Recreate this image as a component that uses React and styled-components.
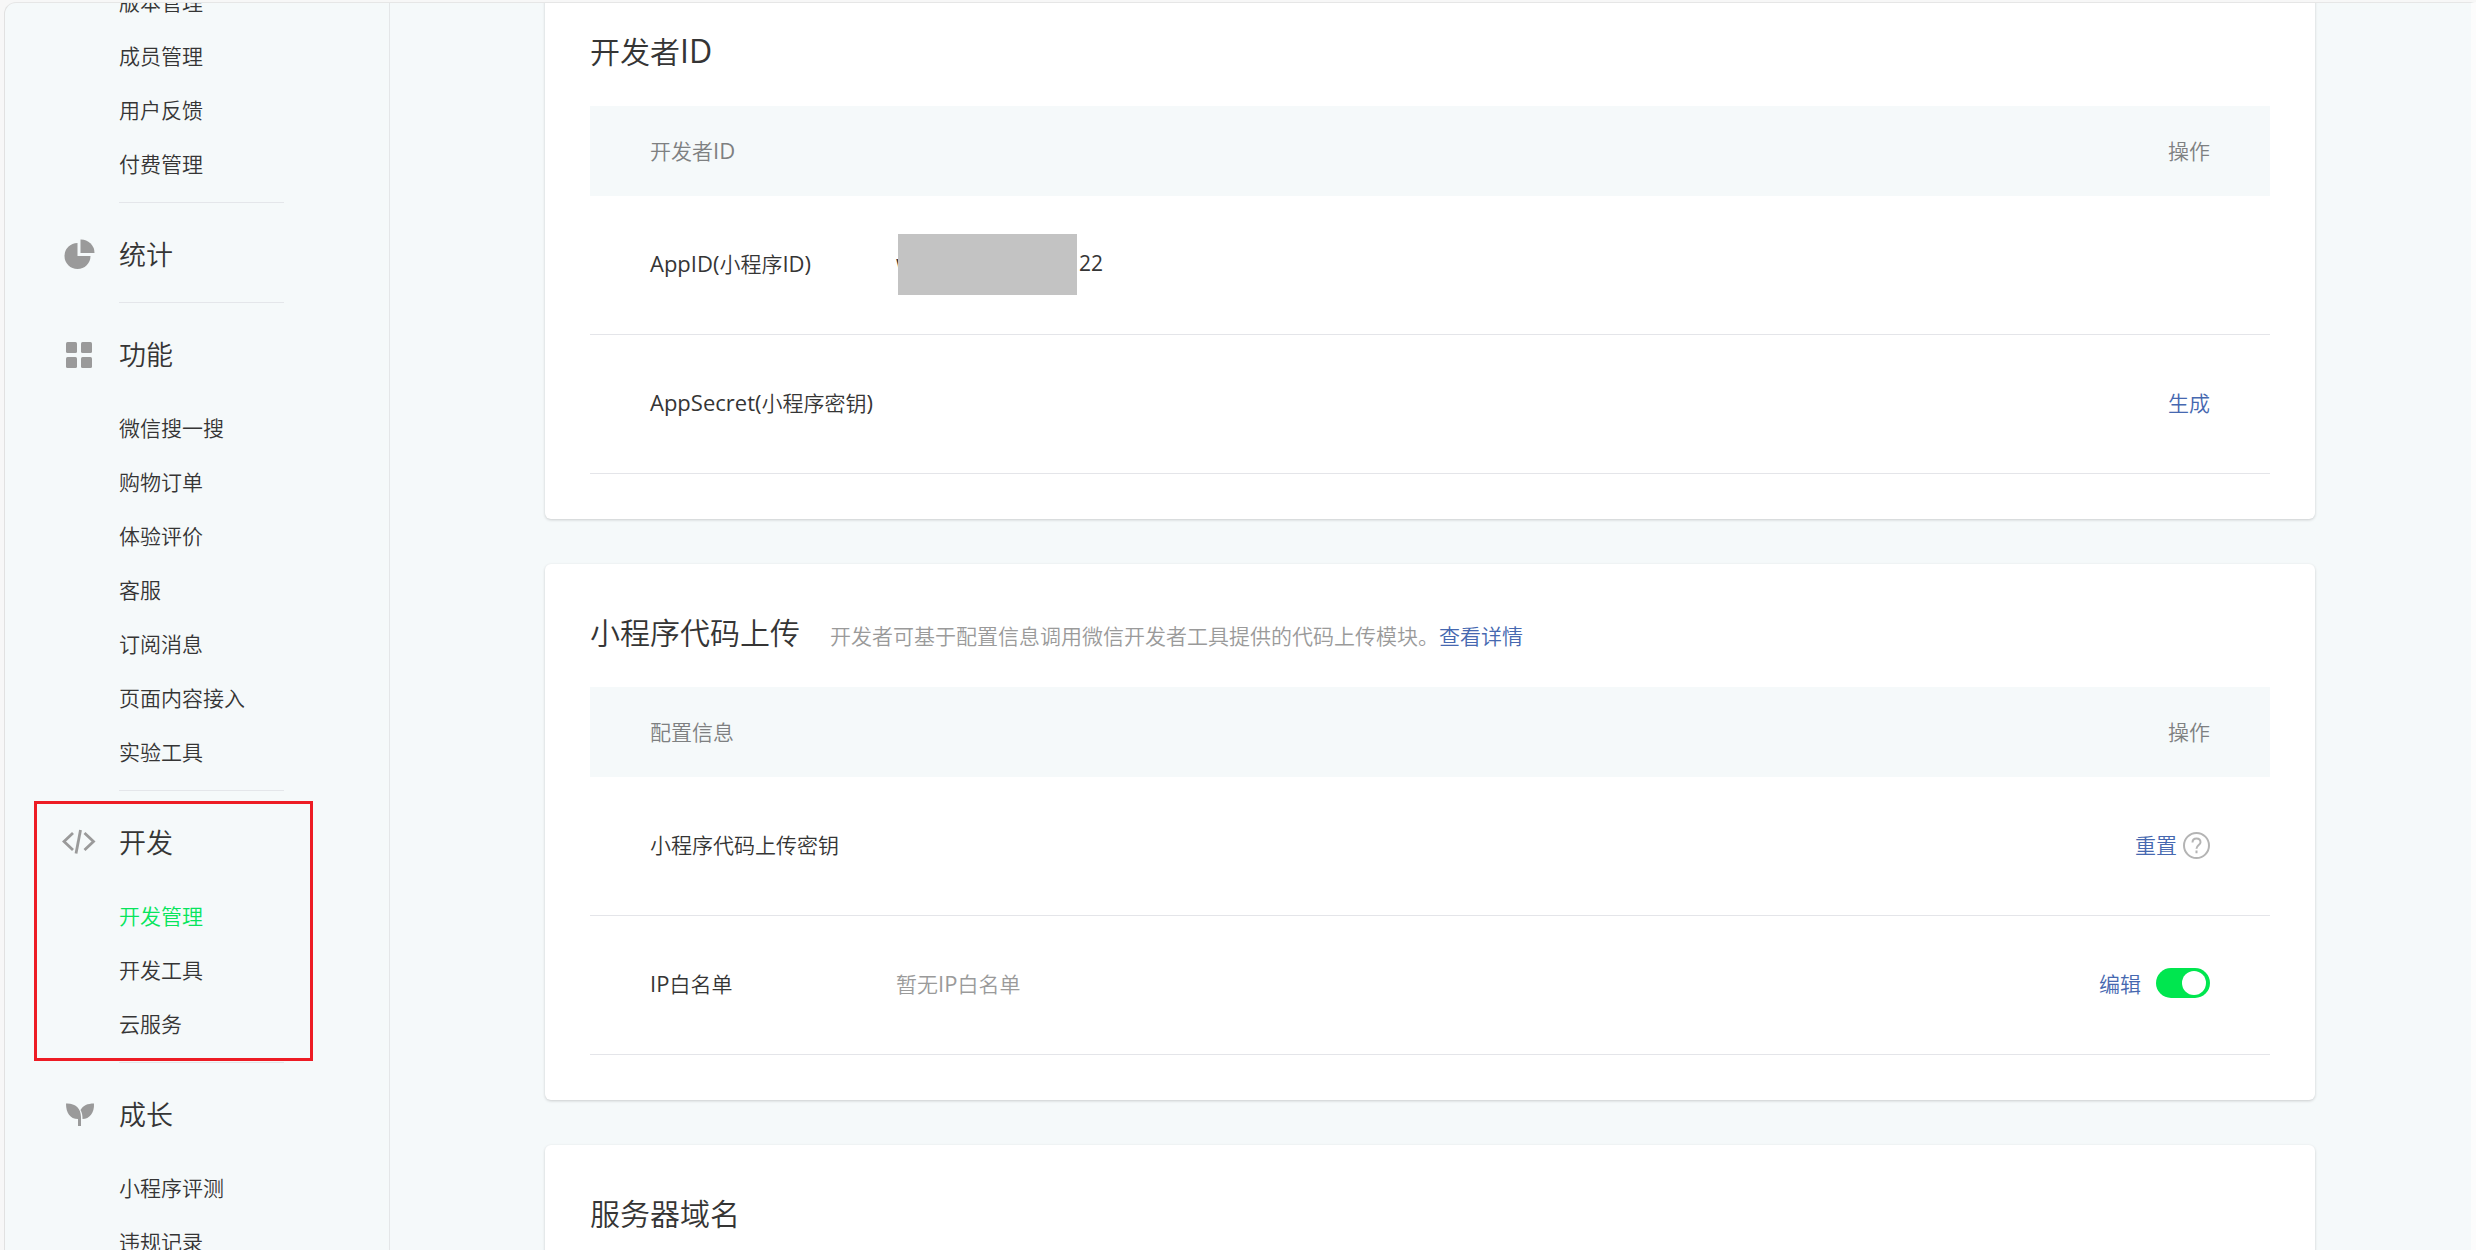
import React, { useState } from "react";
import styled, { createGlobalStyle } from "styled-components";

const menu = [
  {
    items: ["版本管理", "成员管理", "用户反馈", "付费管理"],
  },
  { title: "统计", icon: "chart", items: [] },
  {
    title: "功能",
    icon: "grid",
    items: [
      "微信搜一搜",
      "购物订单",
      "体验评价",
      "客服",
      "订阅消息",
      "页面内容接入",
      "实验工具",
    ],
  },
  {
    title: "开发",
    icon: "code",
    marked: true,
    items: ["开发管理", "开发工具", "云服务"],
  },
  { title: "成长", icon: "sprout", items: ["小程序评测", "违规记录"] },
];

const icons = {
  chart: (
    <>
      <path d="M15.500 5v13h13A13 13 0 1 1 15.500 5z" />
      <path d="M18.500 1.500A13.500 13.500 0 0 1 32.500 15H18.500z" />
    </>
  ),
  grid: (
    <>
      <rect x="4" y="4" width="11" height="11" rx="1.5" />
      <rect x="19" y="4" width="11" height="11" rx="1.5" />
      <rect x="4" y="19" width="11" height="11" rx="1.5" />
      <rect x="19" y="19" width="11" height="11" rx="1.5" />
    </>
  ),
  code: (
    <g fill="none" stroke="#9a9a9a" strokeWidth="2.8">
      <path d="M11 7L2 15.500L11 24" />
      <path d="M22.500 7L31.500 15.500L22.500 24" />
      <path d="M18.500 4L14 27.500" />
    </g>
  ),
  sprout: (
    <>
      <path d="M4 5.500C13 5 19 10 19 19v9h-3v-7C8 21 4 15 4 5.500z" />
      <path d="M32 5.500C32.500 15 27.500 21 20.500 21C20.500 17 20 14.500 18.500 12C21 7.500 25.500 5.500 32 5.500z" />
    </>
  ),
};

// latin letters are set a little heavier and larger than the chinese ones
function Mixed({ text, large }) {
  return text.split(/([A-Za-z()]+)/).map((part, i) =>
    i % 2 ? (
      <Latin key={i} $large={large}>
        {part}
      </Latin>
    ) : (
      part
    )
  );
}

function MenuSection({ section }) {
  return (
    <Section>
      {section.title && (
        <>
          <Divider />
          <SectionTitle>
            <MenuIcon viewBox="0 0 34 34" aria-hidden="true">
              {icons[section.icon]}
            </MenuIcon>
            <SectionName>{section.title}</SectionName>
          </SectionTitle>
        </>
      )}
      {section.items.length > 0 && (
        <MenuList>
          {section.items.map((item) => (
            <li key={item}>
              <MenuLink href="#" $active={item === "开发管理"}>
                {item}
              </MenuLink>
            </li>
          ))}
        </MenuList>
      )}
      {section.marked && <Marker />}
    </Section>
  );
}

function InfoTable({ heading, children }) {
  return (
    <Table>
      <thead>
        <tr>
          <HeadCell colSpan={2}>
            <Mixed text={heading} />
          </HeadCell>
          <HeadCell $right>操作</HeadCell>
        </tr>
      </thead>
      <tbody>{children}</tbody>
    </Table>
  );
}

function App() {
  const [whitelist, setWhitelist] = useState(true);

  return (
    <>
      <GlobalStyle />
      <Frame>
        <Sidebar>
          {menu.map((section, i) => (
            <MenuSection key={i} section={section} />
          ))}
        </Sidebar>
        <Content>
          <Card>
            <CardHeader>
              <CardTitle>
                <Mixed text="开发者ID" large />
              </CardTitle>
            </CardHeader>
            <InfoTable heading="开发者ID">
              <tr>
                <NameCell>
                  <Mixed text="AppID(小程序ID)" />
                </NameCell>
                <Cell>
                  <AppId>
                    <span>w</span>
                    <span>22</span>
                    <Mask />
                  </AppId>
                </Cell>
                <Cell />
              </tr>
              <tr>
                <NameCell colSpan={2}>
                  <Mixed text="AppSecret(小程序密钥)" />
                </NameCell>
                <Cell>
                  <Actions>
                    <TextButton type="button">生成</TextButton>
                  </Actions>
                </Cell>
              </tr>
            </InfoTable>
          </Card>

          <Card>
            <CardHeader>
              <CardTitle>小程序代码上传</CardTitle>
              <Description>
                开发者可基于配置信息调用微信开发者工具提供的代码上传模块。
                <Link href="#">查看详情</Link>
              </Description>
            </CardHeader>
            <InfoTable heading="配置信息">
              <tr>
                <NameCell>小程序代码上传密钥</NameCell>
                <Cell />
                <Cell>
                  <Actions $gap="6px" $align="flex-end">
                    <TextButton type="button">重置</TextButton>
                    <HelpIcon viewBox="0 0 27 27" aria-hidden="true">
                      <circle cx="13.5" cy="13.5" r="12.5" />
                      <path d="M9.500 10.500C9.500 8 11 6.500 13.500 6.500S17.500 8 17.500 10.200C17.500 13 13.500 13.200 13.500 16.800M13.500 18.600v2.600" />
                    </HelpIcon>
                  </Actions>
                </Cell>
              </tr>
              <tr>
                <NameCell>
                  <Mixed text="IP白名单" />
                </NameCell>
                <Cell $muted>
                  <Mixed text="暂无IP白名单" />
                </Cell>
                <Cell>
                  <Actions $gap="15px">
                    <TextButton type="button">编辑</TextButton>
                    <Switch
                      type="checkbox"
                      role="switch"
                      aria-label="IP白名单"
                      checked={whitelist}
                      onChange={(e) => setWhitelist(e.target.checked)}
                    />
                  </Actions>
                </Cell>
              </tr>
            </InfoTable>
          </Card>

          <Card>
            <CardHeader>
              <CardTitle>服务器域名</CardTitle>
            </CardHeader>
          </Card>
        </Content>
      </Frame>
    </>
  );
}

const GlobalStyle = createGlobalStyle`
  * {
    box-sizing: border-box;
  }

  body {
    margin: 0;
    background: #f7f7f7;
    color: #353535;
    font-family: "Open Sans", "Noto Sans CJK SC", sans-serif;
    font-size: 21px;
    font-weight: 350;
    overflow: hidden;
  }
`;

const Latin = styled.span`
  font-size: ${(props) => (props.$large ? "32px" : "22px")};
  font-weight: 400;
  line-height: 1;
`;

const Frame = styled.div`
  display: flex;
  height: calc(100vh - 2px);
  margin: 2px 0 0 4px;
  border-top: 1px solid #e6e6e6;
  border-left: 1px solid #e1e1e1;
  border-right: 5px solid #fcfcfc;
  border-top-left-radius: 12px;
  background: #f5f9fa;
  overflow: hidden;
`;

const Sidebar = styled.nav`
  flex: none;
  width: 385px;
  border-right: 1px solid #e4e6e8;

  /* scrolled part way down */
  > :first-child {
    margin-top: -27px;
  }
`;

const Section = styled.section`
  position: relative;
  padding-left: 114px;
`;

const Divider = styled.hr`
  width: 165px;
  height: 1px;
  margin: 0 0 25px;
  border: 0;
  background: #e4e6ea;
`;

const SectionTitle = styled.h2`
  display: flex;
  align-items: center;
  gap: 23px;
  height: 54px;
  margin: 0 0 20px -57px;
  font-size: 27px;
  font-weight: 350;
`;

const SectionName = styled.span`
  padding-bottom: 4px;
`;

const MenuIcon = styled.svg`
  width: 34px;
  height: 34px;
  fill: #9a9a9a;
`;

const MenuList = styled.ul`
  margin: 0;
  padding: 0 0 10px;
  list-style: none;
`;

const MenuLink = styled.a`
  display: block;
  padding-bottom: 2px;
  line-height: 52px;
  color: ${(props) => (props.$active ? "#07e55c" : "#353535")};
  text-decoration: none;
`;

const Marker = styled.div`
  position: absolute;
  top: 11px;
  bottom: 1px;
  left: 29px;
  width: 279px;
  border: 3px solid #ed1c24;
  pointer-events: none;
`;

const Content = styled.main`
  flex: 1;
  display: flex;
  flex-direction: column;
  gap: 45px;
  min-width: 0;
  margin-top: -20px;
  padding: 0 156px 0 155px;
`;

const Card = styled.section`
  flex: none;
  padding: 45px;
  border-radius: 6px;
  background: #ffffff;
  box-shadow: 0 1px 3px rgba(0, 0, 0, 0.18);
`;

const CardHeader = styled.header`
  display: flex;
  align-items: baseline;
  gap: 30px;
  height: 50px;
  margin-bottom: 28px;
  line-height: 48px;
`;

const CardTitle = styled.h2`
  margin: 0;
  font-size: 30px;
  font-weight: 350;
`;

const Description = styled.p`
  margin: 0;
  color: #9a9a9a;
`;

const Link = styled.a`
  color: #4668b0;
  text-decoration: none;
`;

const Table = styled.table`
  width: 100%;
  border-spacing: 0;
`;

const HeadCell = styled.th`
  height: 90px;
  padding: 0 60px 3px;
  background: #f5f9fa;
  color: #7e8081;
  font-weight: 350;
  text-align: ${(props) => (props.$right ? "right" : "left")};
`;

const Cell = styled.td`
  height: 139px;
  padding: 0 0 4px;
  border-bottom: 1px solid #e4e5e9;
  color: ${(props) => (props.$muted ? "#9a9a9a" : "#353535")};
`;

const NameCell = styled(Cell)`
  width: 306px;
  padding-left: 60px;
`;

const AppId = styled.div`
  position: relative;
  display: flex;
  justify-content: space-between;
  width: 207px;
  font-weight: 400;
`;

const Mask = styled.span`
  position: absolute;
  top: 50%;
  left: 2px;
  width: 179px;
  height: 61px;
  margin-top: -29px;
  background: #c3c3c3;
`;

const Actions = styled.div`
  display: flex;
  align-items: ${(props) => props.$align || "center"};
  justify-content: flex-end;
  gap: ${(props) => props.$gap || "0"};
  padding-right: 60px;
`;

const TextButton = styled.button`
  padding: 0;
  border: 0;
  background: none;
  color: #4668b0;
  font: inherit;
  cursor: pointer;
`;

const HelpIcon = styled.svg`
  width: 27px;
  height: 27px;
  fill: none;
  stroke: #b4b4b4;
  stroke-width: 2;
`;

const Switch = styled.input`
  appearance: none;
  display: flex;
  align-items: center;
  justify-content: ${(props) => (props.checked ? "flex-end" : "flex-start")};
  width: 54px;
  height: 30px;
  margin: 0;
  padding: 0 4px;
  border-radius: 15px;
  background: ${(props) => (props.checked ? "#00e64f" : "#d9d9d9")};
  cursor: pointer;

  &::before {
    content: "";
    width: 24px;
    height: 24px;
    border-radius: 50%;
    background: #ffffff;
  }
`;

export default App;
